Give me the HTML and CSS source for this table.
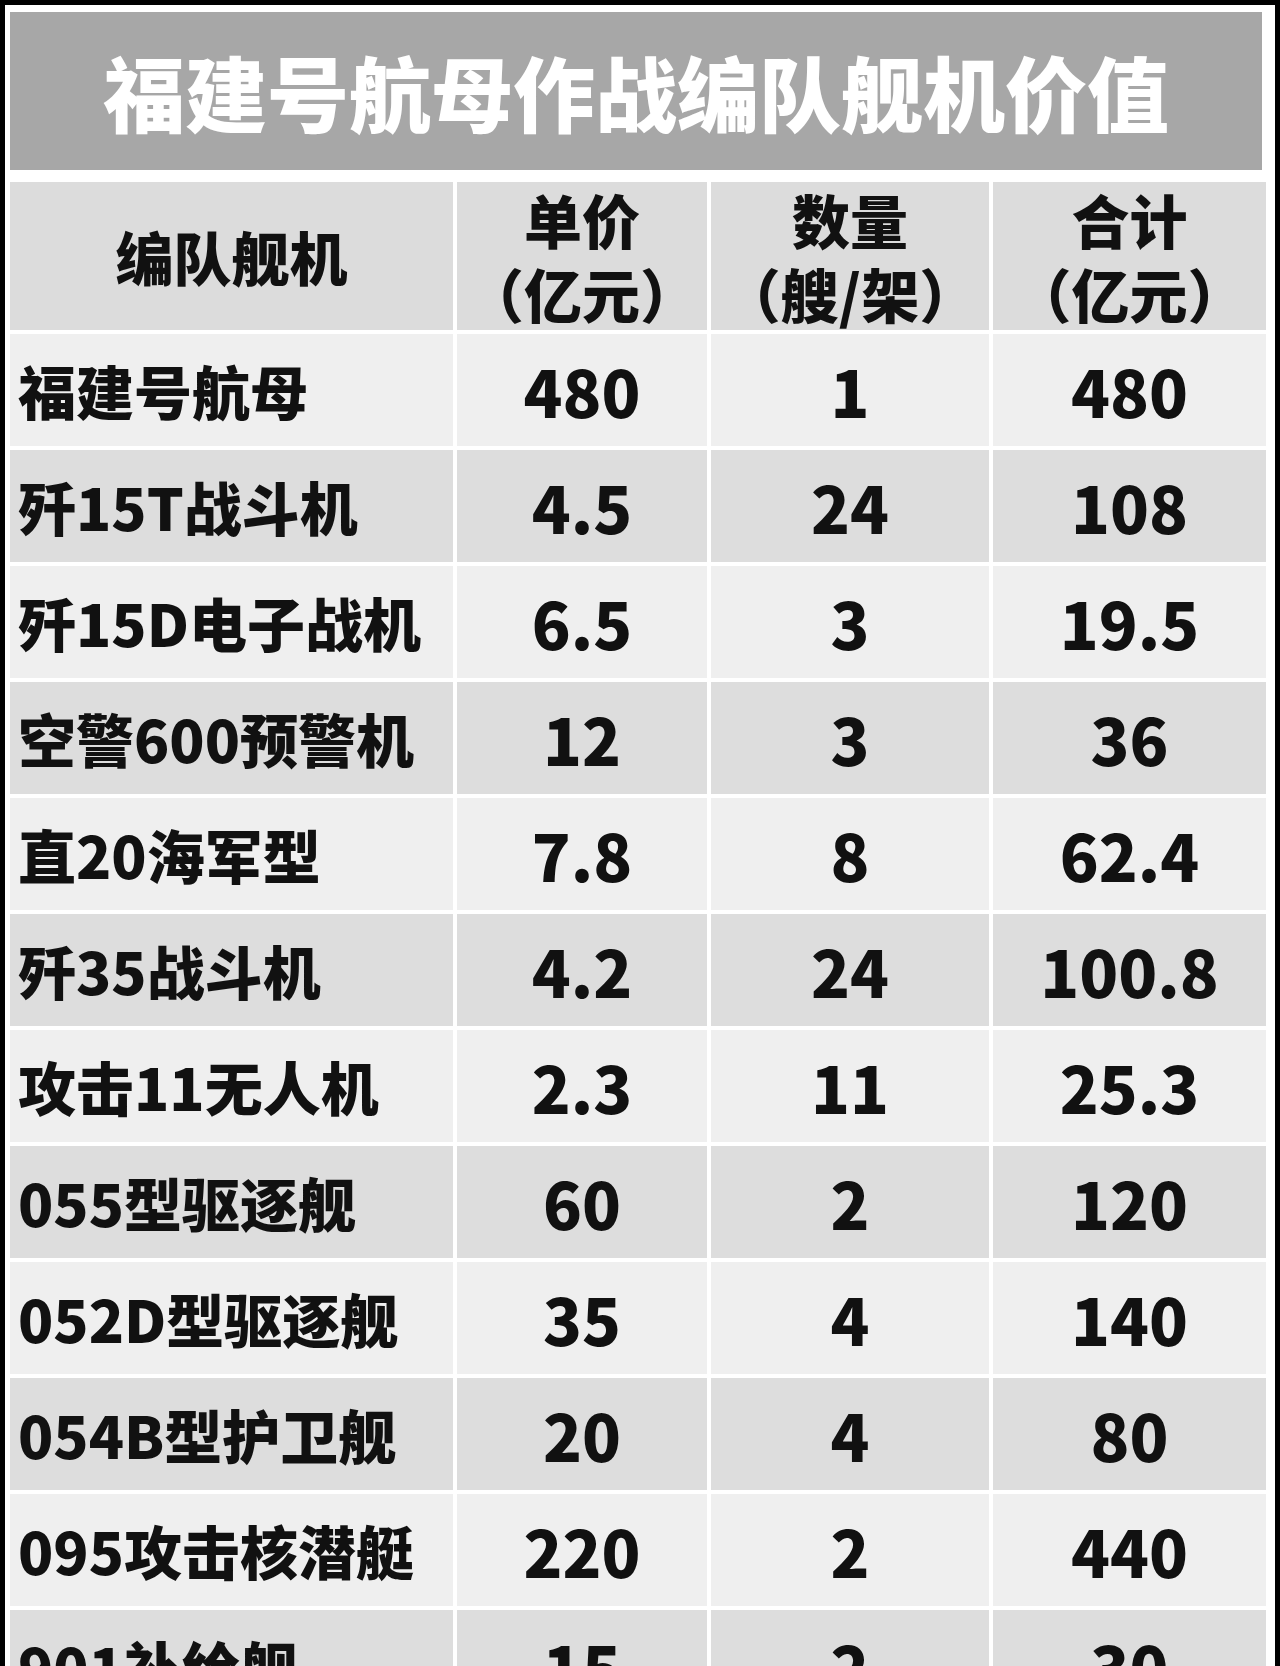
FILE: index.html
```html
<!DOCTYPE html>
<html lang="zh-CN">
<head>
<meta charset="utf-8">
<title>福建号航母作战编队舰机价值</title>
<link rel="stylesheet" href="styles.css">
</head>
<body>
<div class="frame">
  <div class="title">福建号航母作战编队舰机价值</div>
  <div class="grid">
    <div class="cell head name">编队舰机</div>
    <div class="cell head"><p class="htext">单价<br>（亿元）</p></div>
    <div class="cell head"><p class="htext">数量<br>（艘/架）</p></div>
    <div class="cell head"><p class="htext">合计<br>（亿元）</p></div>

    <div class="cell name light">福建号航母</div><div class="cell num light">480</div><div class="cell num light">1</div><div class="cell num light">480</div>
    <div class="cell name dark">歼15T战斗机</div><div class="cell num dark">4.5</div><div class="cell num dark">24</div><div class="cell num dark">108</div>
    <div class="cell name light">歼15D电子战机</div><div class="cell num light">6.5</div><div class="cell num light">3</div><div class="cell num light">19.5</div>
    <div class="cell name dark">空警600预警机</div><div class="cell num dark">12</div><div class="cell num dark">3</div><div class="cell num dark">36</div>
    <div class="cell name light">直20海军型</div><div class="cell num light">7.8</div><div class="cell num light">8</div><div class="cell num light">62.4</div>
    <div class="cell name dark">歼35战斗机</div><div class="cell num dark">4.2</div><div class="cell num dark">24</div><div class="cell num dark">100.8</div>
    <div class="cell name light">攻击11无人机</div><div class="cell num light">2.3</div><div class="cell num light">11</div><div class="cell num light">25.3</div>
    <div class="cell name dark">055型驱逐舰</div><div class="cell num dark">60</div><div class="cell num dark">2</div><div class="cell num dark">120</div>
    <div class="cell name light">052D型驱逐舰</div><div class="cell num light">35</div><div class="cell num light">4</div><div class="cell num light">140</div>
    <div class="cell name dark">054B型护卫舰</div><div class="cell num dark">20</div><div class="cell num dark">4</div><div class="cell num dark">80</div>
    <div class="cell name light">095攻击核潜艇</div><div class="cell num light">220</div><div class="cell num light">2</div><div class="cell num light">440</div>
    <div class="cell name dark">901补给舰</div><div class="cell num dark">15</div><div class="cell num dark">2</div><div class="cell num dark">30</div>
  </div>
</div>
</body>
</html>
```

FILE: styles.css
```css
html, body {
  margin: 0;
  padding: 0;
  background: #000;
}

body {
  font-family: "Noto Sans CJK SC", "Noto Sans", sans-serif;
  font-weight: 900;
  color: #111;
  overflow: hidden;
  height: 1666px;
}

.frame {
  background: #fff;
  margin: 5px 5px 0 5px;
  padding: 7px 9px 0 5px;
  height: 1700px;
}

.title {
  background: #a7a7a7;
  color: #fff;
  height: 158px;
  margin-right: 4px;
  display: flex;
  align-items: center;
  justify-content: center;
  font-size: 82px;
  line-height: 1;
}

.grid {
  margin-top: 12px;
  display: grid;
  grid-template-columns: 443px 250px 278px 273px;
  grid-template-rows: 148px;
  grid-auto-rows: 112px;
  column-gap: 4px;
  row-gap: 4px;
}

.cell {
  display: flex;
  align-items: center;
  justify-content: center;
  font-size: 58px;
  line-height: 1;
  white-space: nowrap;
}

.cell.num {
  font-size: 64px;
}

.cell.name {
  justify-content: flex-start;
  padding-left: 8px;
}

.cell.head {
  background: #dcdcdc;
  font-feature-settings: "halt" 1;
}

.htext {
  margin: 0;
  text-align: center;
  line-height: 74px;
}

.cell.head.name {
  justify-content: center;
  padding-left: 0;
}

.light {
  background: #efefef;
}

.dark {
  background: #dddddd;
}
```
